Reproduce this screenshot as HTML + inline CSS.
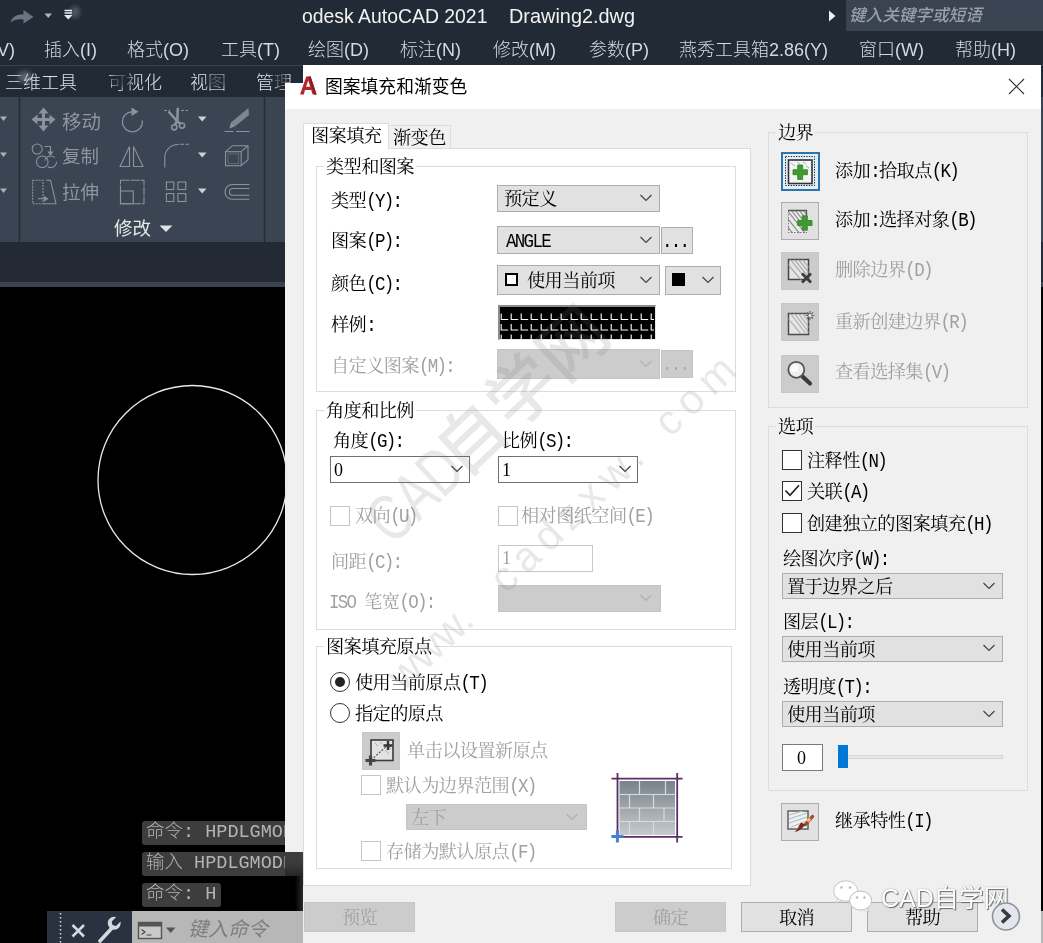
<!DOCTYPE html>
<html lang="zh-CN">
<head>
<meta charset="utf-8">
<title>图案填充和渐变色</title>
<style>
*{box-sizing:border-box;margin:0;padding:0}
html,body{width:1043px;height:943px;overflow:hidden;background:#000}
body{will-change:transform;position:relative;font-family:"Liberation Sans","Noto Sans CJK SC",sans-serif}
.a{position:absolute}
/* ---------- AutoCAD background ---------- */
#titlebar{left:0;top:0;width:1043px;height:33px;background:#222a35}
#menubar{left:0;top:33px;width:1043px;height:33px;background:#222a35;border-bottom:1px solid #3a4250}
#tabrow{left:0;top:66px;width:1043px;height:31px;background:#222a35}
#ribbon{left:0;top:97px;width:1043px;height:145px;background:#3b4452}
#strip{left:0;top:242px;width:1043px;height:40px;background:#242a34}
#strip2{left:0;top:282px;width:1043px;height:5px;background:#3b424e}
#canvas{left:0;top:287px;width:1043px;height:656px;background:#000}
.tt{color:#f2f2f2;font-size:19px;line-height:33px;white-space:pre}
.mi{color:#d6d9de;font-weight:300;font-size:18px;line-height:34px;white-space:nowrap;top:33px}
.tb{color:#e0e2e6;font-weight:300;font-size:18px;line-height:30px;white-space:nowrap;top:68.3px}
.rl{color:#8d95a3;font-size:18.5px;line-height:24px;white-space:nowrap}
#search{left:846px;top:0;width:197px;height:31px;background:#3a4352;color:#9aa0aa;font-style:italic;font-size:16.6px;line-height:32.5px;padding-left:3px;white-space:nowrap;font-weight:500}
.cl{background:#3d3d3d;border-radius:3px;color:#b4b4b4;font-family:"Liberation Mono","Noto Sans CJK SC",monospace;font-size:18.5px;line-height:24px;padding-left:4px;white-space:pre;overflow:hidden;font-weight:300}
/* ---------- Dialog ---------- */
#dlg{left:303px;top:65px;width:738px;height:880px;background:#f0f0f0}
#dlg2{left:285px;top:83px;width:20px;height:777px;background:#f0f0f0}
#dlgtitle{left:303px;top:65px;width:738px;height:44px;background:#fff}
#dlgtitle2{left:285px;top:83px;width:20px;height:26px;background:#fff}
#dlgtitle span{position:absolute;left:22px;top:0;line-height:45px;font-size:17.8px;color:#000;white-space:nowrap}
.s{font-family:"Liberation Mono","Noto Serif CJK SC",serif;font-size:18.2px;letter-spacing:-.6px;line-height:22px;color:#000;white-space:nowrap;font-weight:400;margin-top:1.5px}
.s i{font-style:normal;font-size:17.5px;letter-spacing:-1.7px;display:inline-block;transform:scaleY(1.14);transform-origin:50% 74%;white-space:pre}
.s u{text-decoration:none;font-family:"Liberation Serif",serif;font-size:18px;letter-spacing:0;position:relative;top:-.5px}
.g{color:#a0a0a0}
.grp{border:1px solid #dcdcdc}
.lbl{padding:0 2px}
.dd{background:#e1e1e1;border:1px solid #adadad}
.ddd{background:#ccc;border:1px solid #c4c4c4}
.cmb{background:#fff;border:1px solid #6e6e6e}
.cb{background:#fff;border:1px solid #333;width:20px;height:20px}
.cbd{background:#fff;border:1px solid #c6c6c6;width:20px;height:20px}
.ib{width:38px;height:38px;background:#e1e1e1;border:1px solid #adadad}
.ibd{width:38px;height:38px;background:#ccc;border:1px solid #c8c8c8}
.btn{margin-top:0;background:#e1e1e1;border:1px solid #adadad;text-align:center;height:30px;line-height:32px;overflow:hidden}
.btnd{margin-top:0;background:#ccc;border:1px solid #c6c6c6;text-align:center;height:30px;line-height:32px;overflow:hidden;color:#a0a0a0}
.wm{color:rgba(120,120,120,.17);white-space:nowrap;line-height:1;transform-origin:0 50%;height:1em;margin-top:-.5em}
</style>
</head>
<body>
<!-- AutoCAD window chrome -->
<div class="a" id="titlebar"></div>
<div class="a" id="menubar"></div>
<div class="a" id="tabrow"></div>
<div class="a" id="ribbon"></div>
<div class="a" id="strip"></div>
<div class="a" id="strip2"></div>
<div class="a" id="canvas"></div>

<div class="a tt" style="left:302px;top:0;font-size:19.4px">odesk AutoCAD 2021</div>
<div class="a tt" style="left:509px;top:0;font-size:19.9px">Drawing2.dwg</div>
<div class="a" id="search">键入关键字或短语</div>

<div class="a mi" style="left:-3px">V)</div>
<div class="a mi" style="left:44px">插入(I)</div>
<div class="a mi" style="left:127px">格式(O)</div>
<div class="a mi" style="left:221px">工具(T)</div>
<div class="a mi" style="left:308px">绘图(D)</div>
<div class="a mi" style="left:400px">标注(N)</div>
<div class="a mi" style="left:493px">修改(M)</div>
<div class="a mi" style="left:589px">参数(P)</div>
<div class="a mi" style="left:679px">燕秀工具箱2.86(Y)</div>
<div class="a mi" style="left:859px">窗口(W)</div>
<div class="a mi" style="left:955px">帮助(H)</div>

<div class="a tb" style="left:5px">三维工具</div>
<div class="a tb" style="left:108px">可视化</div>
<div class="a tb" style="left:190px">视图</div>
<div class="a tb" style="left:256px">管理</div>

<div class="a rl" style="left:62px;top:110px;font-size:19.5px">移动</div>
<div class="a rl" style="left:62px;top:145px">复制</div>
<div class="a rl" style="left:62px;top:181px">拉伸</div>
<div class="a rl" style="left:114px;top:217px;color:#e8e8e8">修改</div>


<!-- smudge marks present in the screenshot -->
<div class="a" style="left:18px;top:71px;width:14px;height:12px;border-radius:50%;background:rgba(190,194,200,.38);filter:blur(2.5px)"></div>
<div class="a" style="left:110px;top:72px;width:22px;height:16px;border-radius:50%;background:rgba(34,42,53,.75);filter:blur(2.5px)"></div>
<div class="a" style="left:207px;top:73px;width:20px;height:15px;border-radius:50%;background:rgba(34,42,53,.7);filter:blur(2.5px)"></div>
<div class="a" style="left:272px;top:72px;width:16px;height:16px;border-radius:50%;background:rgba(34,42,53,.7);filter:blur(2.5px)"></div>
<div class="a" style="left:70px;top:6px;width:10px;height:12px;border-radius:50%;background:rgba(150,156,166,.4);filter:blur(2px)"></div>
<!-- command line history -->
<div class="a cl" style="left:142px;top:821px;width:160px;height:24px">命令: HPDLGMODE</div>
<div class="a cl" style="left:142px;top:852px;width:170px;height:24px">输入 HPDLGMODE</div>
<div class="a cl" style="left:142px;top:883px;width:79px;height:24px">命令: H</div>
<div class="a" style="left:47px;top:911px;width:85px;height:32px;background:#2a3140"></div>
<div class="a" style="left:132px;top:911px;width:911px;height:32px;background:#b7b7b7"></div>
<div class="a" style="left:188px;top:911px;line-height:36px;font-size:20px;font-style:italic;color:#7d7d7d;white-space:nowrap">键入命令</div>

<!-- Dialog -->
<div class="a" id="dlg"></div>
<div class="a" id="dlg2"></div>
<div class="a" id="dlgtitle2"></div>
<div class="a" style="left:285px;top:860px;width:18px;height:51px;background:linear-gradient(90deg,#000 0,#000 55%,#2a2a2a 100%)"></div>
<div class="a" style="left:285px;top:911px;width:18px;height:32px;background:#b7b7b7"></div>
<div class="a" style="left:285px;top:852px;width:18px;height:24px;background:linear-gradient(180deg,#3d3d3d 0,#3d3d3d 40%,#262626 100%)"></div>
<div class="a" id="dlgtitle"><span>图案填充和渐变色</span></div>

<!-- tabs -->
<div class="a" style="left:303px;top:148px;width:448px;height:738px;background:#fff;border:1px solid #dcdcdc"></div>
<div class="a" style="left:388px;top:125px;width:63px;height:23px;background:#f0f0f0;border:1px solid #dcdcdc;border-bottom:none"></div>
<div class="a" style="left:303px;top:123px;width:86px;height:26px;background:#fff;border:1px solid #dcdcdc;border-bottom:none"></div>
<div class="a s" style="left:311px;top:124px">图案填充</div>
<div class="a s" style="left:393px;top:126px">渐变色</div>

<!-- group: type & pattern -->
<div class="a grp" style="left:316px;top:166px;width:420px;height:226px"></div>
<div class="a s lbl" style="left:324px;top:155px;background:#fff">类型和图案</div>
<div class="a s" style="left:331px;top:189px">类型<i>(Y):</i></div>
<div class="a dd" style="left:497px;top:185px;width:163px;height:27px"></div>
<div class="a s" style="left:504px;top:187px">预定义</div>
<div class="a s" style="left:331px;top:229px">图案<i>(P):</i></div>
<div class="a dd" style="left:497px;top:226px;width:163px;height:28px"></div>
<div class="a s" style="left:506px;top:229px"><i>ANGLE</i></div>
<div class="a dd" style="left:661px;top:227px;width:32px;height:27px"></div>
<div class="a s" style="left:662px;top:229px"><i>...</i></div>
<div class="a s" style="left:331px;top:272px">颜色<i>(C):</i></div>
<div class="a dd" style="left:497px;top:265px;width:163px;height:30px"></div>
<div class="a" style="left:505px;top:273px;width:13px;height:13px;border:2px solid #000;background:#fff"></div>
<div class="a s" style="left:527px;top:269px">使用当前项</div>
<div class="a dd" style="left:665px;top:266px;width:56px;height:29px"></div>
<div class="a" style="left:672px;top:273px;width:13px;height:13px;background:#000"></div>
<div class="a s" style="left:331px;top:313px">样例<i>:</i></div>
<div class="a" id="sample" style="left:498px;top:305px;width:158px;height:35px;background:#000;border:2px solid #8a8a8a;border-right:1px solid #e8e8e8;border-bottom:1px solid #e8e8e8"></div>
<div class="a s g" style="left:331px;top:354px">自定义图案<i>(M):</i></div>
<div class="a ddd" style="left:497px;top:349px;width:163px;height:30px"></div>
<div class="a ddd" style="left:661px;top:350px;width:32px;height:28px"></div>
<div class="a s" style="left:662px;top:352px;color:#aaa"><i>...</i></div>

<!-- group: angle & scale -->
<div class="a grp" style="left:316px;top:410px;width:420px;height:220px"></div>
<div class="a s lbl" style="left:324px;top:399px;background:#fff">角度和比例</div>
<div class="a s" style="left:333px;top:429px">角度<i>(G):</i></div>
<div class="a s" style="left:502px;top:429px">比例<i>(S):</i></div>
<div class="a cmb" style="left:330px;top:456px;width:140px;height:27px"></div>
<div class="a s" style="left:334px;top:458px"><u>0</u></div>
<div class="a cmb" style="left:498px;top:456px;width:140px;height:27px"></div>
<div class="a s" style="left:502px;top:458px"><u>1</u></div>
<div class="a cbd" style="left:330px;top:506px"></div>
<div class="a s g" style="left:355px;top:504px">双向<i>(U)</i></div>
<div class="a cbd" style="left:498px;top:506px"></div>
<div class="a s g" style="left:521px;top:504px">相对图纸空间<i>(E)</i></div>
<div class="a s g" style="left:331px;top:550px">间距<i>(C):</i></div>
<div class="a" style="left:498px;top:545px;width:95px;height:27px;background:#fff;border:1px solid #c8c8c8"></div>
<div class="a s g" style="left:502px;top:546px"><u>1</u></div>
<div class="a s g" style="left:329px;top:590px"><i>ISO </i>笔宽<i>(O):</i></div>
<div class="a ddd" style="left:498px;top:585px;width:163px;height:27px"></div>

<!-- group: origin -->
<div class="a grp" style="left:316px;top:646px;width:416px;height:223px"></div>
<div class="a s lbl" style="left:324px;top:635px;background:#fff">图案填充原点</div>
<div class="a" style="left:330px;top:672px;width:20px;height:20px;border:1px solid #333;border-radius:50%;background:#fff"></div>
<div class="a" style="left:335px;top:677px;width:10px;height:10px;border-radius:50%;background:#222"></div>
<div class="a s" style="left:355px;top:671px">使用当前原点<i>(T)</i></div>
<div class="a" style="left:330px;top:703px;width:20px;height:20px;border:1px solid #333;border-radius:50%;background:#fff"></div>
<div class="a s" style="left:355px;top:702px">指定的原点</div>
<div class="a ibd" style="left:362px;top:732px"></div>
<div class="a s g" style="left:407px;top:739px">单击以设置新原点</div>
<div class="a cbd" style="left:361px;top:775px"></div>
<div class="a s g" style="left:386px;top:774px">默认为边界范围<i>(X)</i></div>
<div class="a ddd" style="left:406px;top:804px;width:181px;height:26px"></div>
<div class="a s g" style="left:411px;top:806px">左下</div>
<div class="a cbd" style="left:361px;top:841px"></div>
<div class="a s g" style="left:386px;top:840px">存储为默认原点<i>(F)</i></div>

<!-- bottom buttons -->
<div class="a s btnd" style="left:304px;top:902px;width:111px">预览</div>
<div class="a s btnd" style="left:615px;top:902px;width:111px">确定</div>
<div class="a s btn" style="left:741px;top:902px;width:111px">取消</div>
<div class="a s btn" style="left:867px;top:902px;width:111px">帮助</div>

<!-- group: boundary -->
<div class="a grp" style="left:768px;top:132px;width:260px;height:276px"></div>
<div class="a s lbl" style="left:776px;top:121px;background:#f0f0f0">边界</div>
<div class="a ib" style="left:781px;top:152px;border:2px solid #2e74a8;background:#e1effa;width:39px;height:39px"></div>
<div class="a s" style="left:835px;top:159px">添加<i>:</i>拾取点<i>(K)</i></div>
<div class="a ib" style="left:781px;top:202px"></div>
<div class="a s" style="left:835px;top:208px">添加<i>:</i>选择对象<i>(B)</i></div>
<div class="a ibd" style="left:781px;top:252px"></div>
<div class="a s g" style="left:835px;top:258px">删除边界<i>(D)</i></div>
<div class="a ibd" style="left:781px;top:303px"></div>
<div class="a s g" style="left:835px;top:310px">重新创建边界<i>(R)</i></div>
<div class="a ibd" style="left:781px;top:355px"></div>
<div class="a s g" style="left:835px;top:360px">查看选择集<i>(V)</i></div>

<!-- group: options -->
<div class="a grp" style="left:768px;top:426px;width:260px;height:365px"></div>
<div class="a s lbl" style="left:776px;top:415px;background:#f0f0f0">选项</div>
<div class="a cb" style="left:782px;top:450px"></div>
<div class="a s" style="left:807px;top:449px">注释性<i>(N)</i></div>
<div class="a cb" style="left:782px;top:481px"></div>
<div class="a s" style="left:807px;top:480px">关联<i>(A)</i></div>
<div class="a cb" style="left:782px;top:513px"></div>
<div class="a s" style="left:807px;top:512px">创建独立的图案填充<i>(H)</i></div>
<div class="a s" style="left:783px;top:547.5px">绘图次序<i>(W):</i></div>
<div class="a dd" style="left:782px;top:573px;width:221px;height:26px"></div>
<div class="a s" style="left:787px;top:575px">置于边界之后</div>
<div class="a s" style="left:783px;top:610px">图层<i>(L):</i></div>
<div class="a dd" style="left:782px;top:636px;width:221px;height:26px"></div>
<div class="a s" style="left:787px;top:638px">使用当前项</div>
<div class="a s" style="left:783px;top:675px">透明度<i>(T):</i></div>
<div class="a dd" style="left:782px;top:701px;width:221px;height:26px"></div>
<div class="a s" style="left:787px;top:703px">使用当前项</div>
<div class="a" style="left:782px;top:744px;width:41px;height:27px;background:#fff;border:1px solid #7a7a7a"></div>
<div class="a s" style="left:797px;top:746px"><u>0</u></div>
<div class="a" style="left:846px;top:755px;width:157px;height:4px;background:#e7e7e7;border:1px solid #d6d6d6"></div>
<div class="a" style="left:838px;top:745px;width:10px;height:23px;background:#0078d7"></div>
<div class="a ib" style="left:781px;top:803px"></div>
<div class="a s" style="left:835px;top:809px">继承特性<i>(I)</i></div>

<!-- watermarks -->
<div class="a wm" style="left:376.4px;top:528.7px;font-size:68px;font-weight:500;transform:rotate(-43.3deg)"><span style="display:inline-block;font-size:66px;transform:scaleX(.75);transform-origin:0 50%;margin-right:-42px">CAD</span><span style="letter-spacing:1.5px">自学网</span></div>
<div class="a wm" style="left:394px;top:682px;font-size:42px;transform:rotate(-43.6deg)">www.<span style="letter-spacing:7.5px;margin-left:41px">cadzxw.</span><span style="letter-spacing:7.5px;margin-left:25px">com</span></div>
<div class="a" id="wx" style="left:881px;top:883px;font-size:25px;line-height:30px;color:#fff;white-space:nowrap;text-shadow:1px 1px 1px #6a6a6a,0 0 1.5px #999">CAD自学网</div>

<svg class="a" id="ov" style="left:0;top:0" width="1043" height="943" viewBox="0 0 1043 943" fill="none" stroke-width="1.2">
<g id="chevrons">
<path d="M640.5 195L646 200.5L651.5 195" stroke="#444"/>
<path d="M640.5 237L646 242.5L651.5 237" stroke="#444"/>
<path d="M640.5 277L646 282.5L651.5 277" stroke="#444"/>
<path d="M702.5 277L708 282.5L713.5 277" stroke="#444"/>
<path d="M451.5 466L457 471.5L462.5 466" stroke="#444"/>
<path d="M619.5 466L625 471.5L630.5 466" stroke="#444"/>
<path d="M983.5 583L989 588.5L994.5 583" stroke="#444"/>
<path d="M983.5 645L989 650.5L994.5 645" stroke="#444"/>
<path d="M983.5 711L989 716.5L994.5 711" stroke="#444"/>
<path d="M640.5 361L646 366.5L651.5 361" stroke="#b0b0b0"/>
<path d="M640.5 595L646 600.5L651.5 595" stroke="#b0b0b0"/>
<path d="M566.5 814L572 819.5L577.5 814" stroke="#b0b0b0"/>
</g>
<g id="sampleL" stroke="#fff" stroke-width="1.1">
<clipPath id="cs"><rect x="500" y="308" width="154" height="31"/></clipPath><g clip-path="url(#cs)">
<path d="M501.2 313.5V319.5H508.2M511.2 313.5V319.5H518.2M521.2 313.5V319.5H528.2M531.2 313.5V319.5H538.2M541.2 313.5V319.5H548.2M551.2 313.5V319.5H558.2M561.2 313.5V319.5H568.2M571.2 313.5V319.5H578.2M581.2 313.5V319.5H588.2M591.2 313.5V319.5H598.2M601.2 313.5V319.5H608.2M611.2 313.5V319.5H618.2M621.2 313.5V319.5H628.2M631.2 313.5V319.5H638.2M641.2 313.5V319.5H648.2M651.2 313.5V319.5H658.2M661.2 313.5V319.5H668.2M501.2 324V330H508.2M511.2 324V330H518.2M521.2 324V330H528.2M531.2 324V330H538.2M541.2 324V330H548.2M551.2 324V330H558.2M561.2 324V330H568.2M571.2 324V330H578.2M581.2 324V330H588.2M591.2 324V330H598.2M601.2 324V330H608.2M611.2 324V330H618.2M621.2 324V330H628.2M631.2 324V330H638.2M641.2 324V330H648.2M651.2 324V330H658.2M661.2 324V330H668.2M501.2 334.4V340.5H508.2M511.2 334.4V340.5H518.2M521.2 334.4V340.5H528.2M531.2 334.4V340.5H538.2M541.2 334.4V340.5H548.2M551.2 334.4V340.5H558.2M561.2 334.4V340.5H568.2M571.2 334.4V340.5H578.2M581.2 334.4V340.5H588.2M591.2 334.4V340.5H598.2M601.2 334.4V340.5H608.2M611.2 334.4V340.5H618.2M621.2 334.4V340.5H628.2M631.2 334.4V340.5H638.2M641.2 334.4V340.5H648.2M651.2 334.4V340.5H658.2M661.2 334.4V340.5H668.2"/></g></g>
<g id="logoA"><path d="M300 94.5L306.3 76.5H310.6L316.6 94.5H312.6L311.2 90H305L303.8 94.5Z M306 86.8H310.2L308.3 80.5Z" fill="#b3262b" fill-rule="evenodd"/><path d="M308.4 76.5H310.6L316.6 94.5H314.2Z" fill="#8a1c22"/></g>
<path d="M1009 79L1024 94M1024 79L1009 94" stroke="#333" stroke-width="1.1"/>
<g id="ic1"><rect x="785.5" y="156.5" width="29" height="29" stroke="#222" stroke-width="1" stroke-dasharray="1.3 1.3"/><rect x="788.5" y="160" width="23.5" height="23.5" fill="#f4f6f4" stroke="#333" stroke-width="1.6"/><path d="M791 163l4 3M797 162l3 2M803 162l3 2M806 166l3 2" stroke="#9fb4c8" stroke-width="1"/><path d="M797.7 165h5v4.7h4.7v5h-4.7v4.7h-5v-4.7h-4.7v-5h4.7z" fill="#3f9a2f" stroke="#2e7d22" stroke-width=".8"/></g>
<g id="ic2"><clipPath id="c2"><rect x="788" y="210" width="19" height="23"/></clipPath><rect x="788" y="210" width="19" height="23" fill="#e9e9e9"/><g clip-path="url(#c2)" stroke="#8f8f8f" stroke-width="1.2"><path d="M784 214l16 20M787 210l18 23M791 210l18 23M795 210l18 23M799 210l18 23M803 210l18 23M781 218l13 17"/></g><path d="M788 210.5H806.5V222" stroke="#555" stroke-width="1.3"/><path d="M788.5 211V233" stroke="#777" stroke-width="1" stroke-dasharray="1.5 1.5"/><path d="M788 232.5H807" stroke="#777" stroke-width="1" stroke-dasharray="1.5 1.5"/><path d="M802.3 215.8h5v4.7h4.7v5h-4.7v4.7h-5v-4.7h-4.7v-5h4.7z" fill="#3f9a2f" stroke="#2e7d22" stroke-width=".8"/></g>
<g id="ic3"><clipPath id="c3"><rect x="788.5" y="259.5" width="20" height="20"/></clipPath><rect x="788.5" y="259.5" width="20" height="20" fill="#e4e4e4" stroke="#444" stroke-width="1.5"/><g clip-path="url(#c3)" stroke="#a8a8a8" stroke-width="1.2"><path d="M786 262l15 18M790 259l16 20M794 259l16 20M798 259l16 20M802 259l16 20"/></g><path d="M802 273.5l9 9M811 273.5l-9 9" stroke="#3c3c3c" stroke-width="2.8"/></g>
<g id="ic4"><clipPath id="c4"><rect x="788.5" y="313.5" width="20" height="21"/></clipPath><rect x="788.5" y="313.5" width="20" height="21" fill="#e6e6e6" stroke="#4a4a4a" stroke-width="1.5"/><g clip-path="url(#c4)" stroke="#b0b0b0" stroke-width="1.2"><path d="M786 316l15 18M790 313l16 21M794 313l16 21M798 313l16 21M802 313l16 21"/></g><path d="M810 311v9M805.5 315.5h9M807 312.5l6 6M813 312.5l-6 6" stroke="#666" stroke-width="1.1"/><circle cx="810" cy="315.5" r="1.6" fill="#eee" stroke="none"/></g>
<g id="ic5"><path d="M802 376l8 7.5" stroke="#3a3a3a" stroke-width="4.2" stroke-linecap="round"/><circle cx="796.3" cy="369.8" r="8" fill="#ededed" stroke="#555" stroke-width="1.8"/><circle cx="794.5" cy="368" r="4" fill="#fafafa" stroke="none"/></g>
<g id="ic6"><rect x="371" y="740" width="22" height="20.5" fill="#e2e2e2" stroke="#3a3a3a" stroke-width="1.6"/><path d="M375 743l3 3M380 742l2 2M385 750l4 4M388 746l3 3" stroke="#aaa" stroke-width="1"/><path d="M371 760l17-15" stroke="#555" stroke-width="1.2" stroke-dasharray="2 1.5"/><path d="M388 741v9M383.5 745.500h9" stroke="#333" stroke-width="2.4"/><path d="M370.500 755.500v10M365.500 760.500h10" stroke="#444" stroke-width="3.2"/></g>
<g id="brick"><defs><linearGradient id="bg" x1="0" y1="0" x2="0" y2="1"><stop offset="0" stop-color="#78828b"/><stop offset="1" stop-color="#c6cacd"/></linearGradient></defs>
<rect x="619.500" y="781" width="55.5" height="54" fill="url(#bg)"/>
<path d="M619.5 794.5H675M619.5 808H675M619.5 821.500H675M639.500 781v13.500M665.500 781v13.500M629.500 794.500v13.500M653.500 794.500v13.500M639.500 808v13.500M664 808v13.500M629.500 821.500v13.500M653.500 821.500v13.500" stroke="#d9dcde" stroke-width="1.2"/>
<path d="M617.500 773v64M677.200 773v69.500M611.500 778.700H682.500M617.500 836.800H682.500" stroke="#5b2d68" stroke-width="1.8"/>
<path d="M617.400 830.500v12M611.400 836.500h12" stroke="#4a7fd4" stroke-width="3"/></g>
<g id="ic7"><clipPath id="c7"><rect x="788" y="811" width="20" height="18"/></clipPath><rect x="788" y="811" width="20" height="18" fill="#eef0f2" stroke="#555" stroke-width="1.4"/><g clip-path="url(#c7)" stroke="#b5bcc4" stroke-width="1.1"><path d="M789 815l14-4M789 819l18-6M789 823l18-6M791 827l16-6M797 829l10-4"/></g><path d="M812.500 816.500l-7 8" stroke="#b0432a" stroke-width="3.4" stroke-linecap="round"/><path d="M805.500 824.500c-2.500 2-4.500 6.500-11 7.500c3-2 3.500-5 6.500-9.500z" fill="#7a2c1c"/><path d="M810 818.500l-2.500 3" stroke="#e8c26a" stroke-width="3"/></g>
<path d="M785.500 490.500l4.500 4.800l9-10" stroke="#222" stroke-width="1.7"/>
<g id="more"><circle cx="1006" cy="916.500" r="13.500" fill="#e3e6ec" stroke="#8f949c" stroke-width="1.6"/><path d="M1002 909.500l7 6.500l-7 6.500" stroke="#353a42" stroke-width="3.6"/></g>
<g id="qat"><path d="M10.500 22.500c1.500-6 7-8.500 13-8V10l10 7l-10 6.500v-4c-5-.8-9.500.2-13 3z" fill="#6b7483"/><path d="M44.500 13.500h7.500l-3.750 4.500z" fill="#aeb4be"/><path d="M64.500 10.500h7.500M64.500 13h7.500" stroke="#e8eaee" stroke-width="1.3"/><path d="M64 15h8.500l-4.250 4.500z" fill="#e8eaee"/><path d="M829 10.500v11l6.500-5.500z" fill="#f0f0f0"/></g>
<path d="M19.500 97v145M264.500 97v145" stroke="#262c37" stroke-width="1.6"/>
<path d="M0 116.500h7l-3.500 4.500zM0 152.500h7l-3.500 4.500zM0 188.500h7l-3.500 4.500z" fill="#aab0bb"/>
<g id="mv" fill="#8a92a0" stroke="none"><path d="M43.500 107.500l5 6h-3.500v4.500h4.500v-3.500l6 5l-6 5v-3.500h-4.500v4.500h3.500l-5 6l-5-6h3.500v-4.500h-4.500v3.500l-6-5l6-5v3.500h4.500v-4.500h-3.500z"/></g>
<g id="rot" stroke="#8a92a0" stroke-width="1.200"><path d="M132 111.800a10 10 0 1 0 10.300 8.500"/><path d="M131.500 107.500l7 4.200l-7 4.200z" fill="#8a92a0" stroke="none"/></g>
<g id="trim" stroke="#8a92a0" stroke-width="1.100"><path d="M164 110.500h6M181 110.500h7" stroke-dasharray="3 1.500"/><path d="M168.500 111.500l9.500 10.500l3 2" stroke-width="2.600"/><path d="M177.800 107.800l-.500 13l-2.500 4" stroke-width="2.600"/><circle cx="174.300" cy="127.300" r="2.600" stroke-width="1.600"/><circle cx="182" cy="125.600" r="2.600" stroke-width="1.600"/></g>
<path d="M198 116.500h8.500l-4.250 5zM198 152.500h8.500l-4.250 5zM198 188.500h8.500l-4.250 5z" fill="#cdd1d8"/>
<g id="erase"><path d="M248.500 108l.500 7l-13.500 11l-4.500-3.500z" fill="#7d8592"/><path d="M231 122.500l4.500 3.500l-6 2.500z" fill="#8a92a0"/><path d="M224.500 131.500h9M236 131.500h13.500" stroke="#8a92a0" stroke-width="1.100"/></g>
<g id="cp" stroke="#8a92a0" stroke-width="1.100"><circle cx="37.200" cy="149" r="5"/><circle cx="42.300" cy="161.800" r="5.800"/><circle cx="50.800" cy="161.800" r="5.800" stroke-dasharray="12 7"/><path d="M44.500 146.500h6v6"/><path d="M47.500 151.500h6l-3 4.500z" fill="#8a92a0" stroke="none"/></g>
<g id="mir" stroke="#8a92a0" stroke-width="1.100"><path d="M129.500 146.500v20h-9.500zM133.500 146.500v20h9.500z"/></g>
<g id="fil" stroke="#8a92a0" stroke-width="1.100"><path d="M164.800 167.500v-10a13 13 0 0 1 13-13h1"/><path d="M180 144.300h9" stroke-dasharray="4 1.500"/></g>
<g id="cube" stroke="#8a92a0" stroke-width="1.100"><rect x="225.500" y="151.700" width="15.700" height="14"/><path d="M225.500 151.700l7-6h15.500v14l-6.800 6M241.200 151.700l6.800-6"/><rect x="228" y="154" width="10.700" height="9.500" stroke-width=".8" opacity=".6"/></g>
<g id="str" stroke="#8a92a0" stroke-width="1.100"><rect x="32.700" y="180.200" width="10.300" height="23.500" stroke-dasharray="2 1"/><path d="M46 180.200h4.500l5.500 23.500h-13"/><path d="M38 198.700h7"/><path d="M44 195.700l4.500 3l-4.500 3z" fill="#8a92a0" stroke="none"/></g>
<g id="scl" stroke="#8a92a0" stroke-width="1.100"><rect x="120.500" y="180.200" width="23.500" height="23.500" stroke-dasharray="9 1"/><rect x="120.500" y="191" width="12.700" height="12.700"/></g>
<g id="arr" stroke="#8a92a0" stroke-width="1.100"><rect x="166.400" y="182" width="7.400" height="7.500"/><rect x="177.900" y="182" width="7.900" height="7.500"/><rect x="166.400" y="193.600" width="7.400" height="7.900"/><rect x="177.900" y="193.600" width="7.900" height="7.900"/></g>
<g id="off" stroke="#8a92a0" stroke-width="1.100"><path d="M249.400 184.500h-17a7.400 7.400 0 0 0 0 14.800h17M249.400 188.500h-16.500a3.400 3.400 0 0 0 0 6.800h16.500"/></g>
<path d="M159.500 225.500h13l-6.500 6.500z" fill="#dfe2e8"/>
<circle cx="192.500" cy="480" r="94.500" stroke="#e8e8e8" stroke-width="1.300"/>
<g id="cmdbar"><path d="M60.500 913v30" stroke="#cfd3da" stroke-width="1.600" stroke-dasharray="1.600 2.400"/><path d="M72.500 925l11.500 11.500M84 925l-11.500 11.500" stroke="#d5d8de" stroke-width="2.600"/><path d="M100 941l11.500-12.500" stroke="#d5d8de" stroke-width="3.600" stroke-linecap="round"/><path d="M120.500 921.500l-4.500 4.500l-3.500-1l-.8-3.500l4.500-4.500a6.500 6.500 0 1 0 4.300 4.500z" fill="#d5d8de"/><rect x="138.500" y="922.500" width="23" height="16" fill="#c9c9c9" stroke="#555" stroke-width="1.400"/><rect x="138.500" y="922.500" width="23" height="4" fill="#555"/><path d="M141.500 929.500l3.500 2.500l-3.500 2.500M146.500 935h5" stroke="#444" stroke-width="1.100"/><path d="M166 927.500h9.500l-4.750 5.500z" fill="#555"/></g>
<g id="wechat"><ellipse cx="845.700" cy="891" rx="12" ry="10.200" fill="#fff" stroke="#c4c4c4" stroke-width="1"/><path d="M838 898.500l-2 4.500l5-2.500z" fill="#fff" stroke="#c4c4c4" stroke-width=".8"/><ellipse cx="860.600" cy="900.600" rx="11" ry="9.500" fill="#fff" stroke="#bdbdbd" stroke-width="1"/><path d="M866 908l3.500 4l-6-2z" fill="#fff" stroke="#c4c4c4" stroke-width=".8"/><circle cx="841.500" cy="887.500" r="1.300" fill="#bbb"/><circle cx="850" cy="887.500" r="1.300" fill="#bbb"/><circle cx="857" cy="897.500" r="1.200" fill="#bbb"/><circle cx="864.500" cy="897.500" r="1.200" fill="#bbb"/></g>
<!--ICONS5-->
</svg>
</body>
</html>
